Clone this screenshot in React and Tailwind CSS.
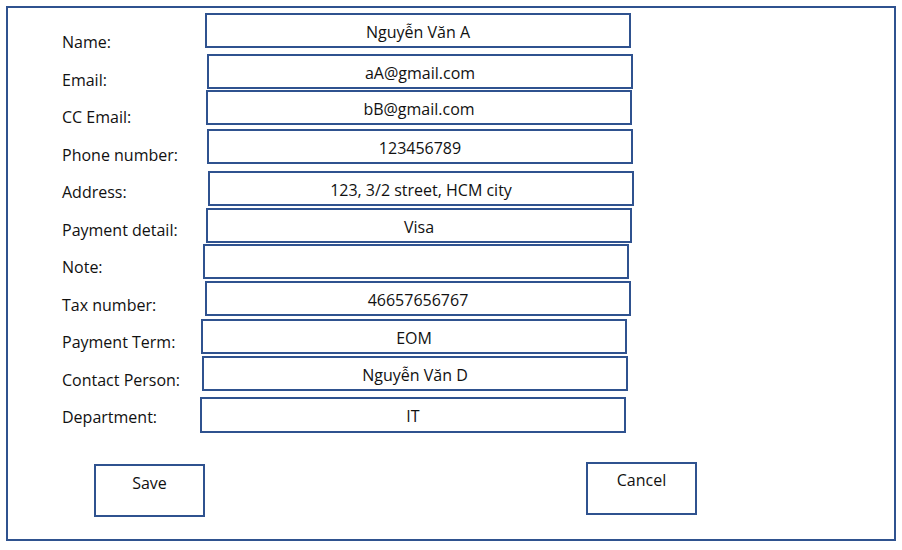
import React from "react";

const rows = [
  { label: "Name:", value: "Nguyễn Văn A", cls: "ml-[5px] mt-[5px] h-[35px]" },
  { label: "Email:", value: "aA@gmail.com", cls: "ml-[7px] mt-[6px] h-[35px]" },
  { label: "CC Email:", value: "bB@gmail.com", cls: "ml-[6px] mt-[1px] h-[35px]" },
  { label: "Phone number:", value: "123456789", cls: "ml-[7px] mt-[4px] h-[35px]" },
  { label: "Address:", value: "123, 3/2 street, HCM city", cls: "ml-[8px] mt-[7px] h-[35px]" },
  { label: "Payment detail:", value: "Visa", cls: "ml-[6px] mt-[2px] h-[35px]" },
  { label: "Note:", value: "", cls: "ml-[3px] mt-[1px] h-[35px]" },
  { label: "Tax number:", value: "46657656767", cls: "ml-[5px] mt-[2px] h-[35px]" },
  { label: "Payment Term:", value: "EOM", cls: "ml-[1px] mt-[3px] h-[35px]" },
  { label: "Contact Person:", value: "Nguyễn Văn D", cls: "ml-[2px] mt-[2px] h-[35px]" },
  { label: "Department:", value: "IT", cls: "ml-[0px] mt-[6px] h-[36px]" },
];

export default function App() {
  return (
    <div
      className="bg-white w-[902px] h-[550px] pt-[6px] pl-[6px] text-[#111]"
      style={{ fontFamily: '"Open Sans", "Noto Sans", sans-serif' }}
    >
      <div className="w-[890px] h-[535px] border-2 border-[#2F528F] flex flex-col">
        <div className="flex items-start h-[425px]">
          <div className="w-[192px] pl-[54px] pt-[16px] flex flex-col text-[16px] leading-[37.5px]">
            {rows.map((r) => (
              <div key={r.label} className="whitespace-nowrap">
                {r.label}
              </div>
            ))}
          </div>
          <div className="flex flex-col">
            {rows.map((r) => (
              <div
                key={r.label}
                className={`${r.cls} w-[426px] border-2 border-[#2F528F] flex items-center justify-center pt-[2px] text-[16px] leading-[20px] whitespace-nowrap`}
              >
                {r.value}
              </div>
            ))}
          </div>
        </div>
        <div className="flex items-start mt-[29px] pl-[86px]">
          <div className="mt-[2px] w-[111px] h-[53px] border-2 border-[#2F528F] flex justify-center pt-[6.5px] text-[16px] leading-[20px]">
            Save
          </div>
          <div className="ml-[381px] w-[111px] h-[53px] border-2 border-[#2F528F] flex justify-center pt-[5.5px] text-[16px] leading-[20px]">
            Cancel
          </div>
        </div>
      </div>
    </div>
  );
}
